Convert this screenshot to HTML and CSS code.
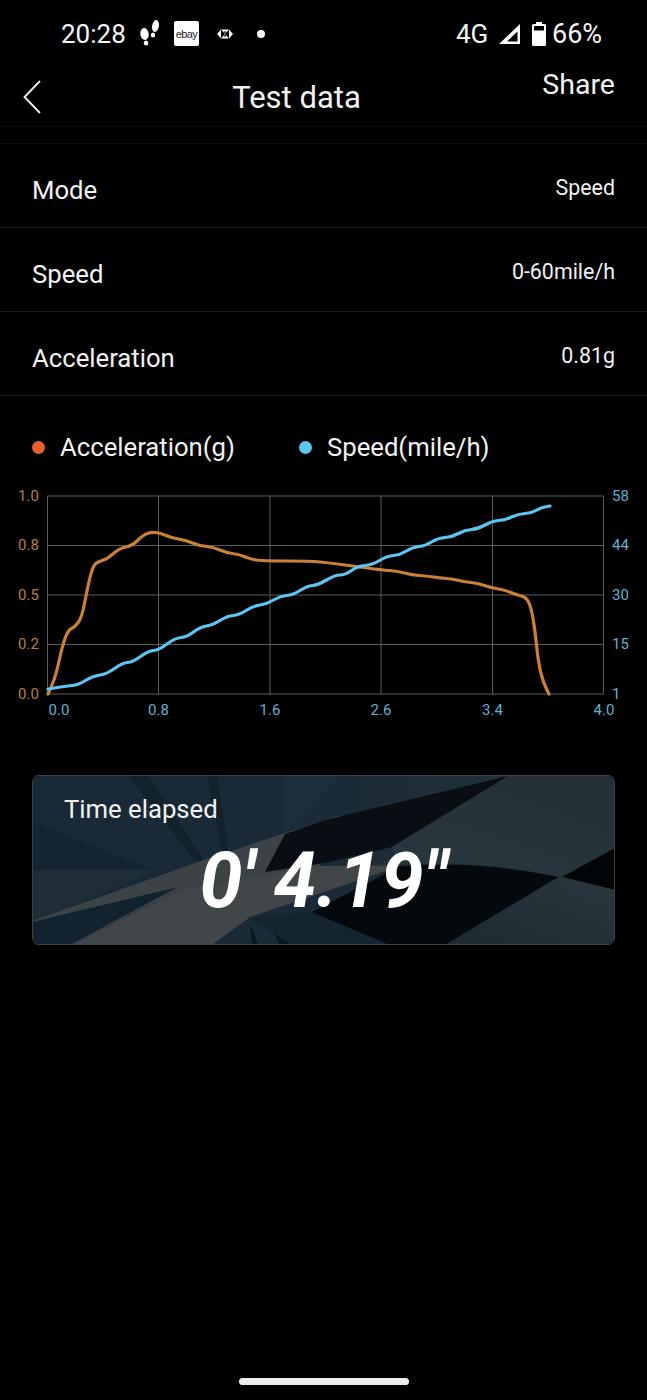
FILE: index.html
```html
<!DOCTYPE html>
<html lang="en">
<head>
<meta charset="utf-8">
<title>Test data</title>
<link rel="stylesheet" href="styles.css">
</head>
<body>
<div class="phone">
  <div class="status">
    <div class="status-left">
      <span class="clock">20:28</span>
      <svg class="ic-steps" viewBox="0 0 24 27" width="24" height="27">
        <ellipse cx="7.500" cy="14" rx="4.200" ry="6" transform="rotate(-8 7.500 14)" fill="#fff"/>
        <ellipse cx="9" cy="23" rx="2.300" ry="2.500" fill="#fff"/>
        <ellipse cx="18.500" cy="6" rx="3.400" ry="6" transform="rotate(10 18.500 6)" fill="#fff"/>
        <ellipse cx="16" cy="15" rx="2.200" ry="2.500" fill="#fff"/>
      </svg>
      <span class="ebay">ebay</span>
      <svg class="ic-hsbc" viewBox="0 0 16 10" width="16" height="10">
        <path d="M0 5 4 .5V9.500ZM16 5 12 .5V9.500ZM4 .5H12L8 5ZM4 9.500H12L8 5Z" fill="#fff"/>
        <path d="M6.500 2.500H9.500L8 4.500ZM6.500 7.500H9.500L8 5.500Z" fill="#000"/>
      </svg>
      <span class="dot"></span>
    </div>
    <div class="status-right">
      <span class="net">4G</span>
      <svg class="ic-signal" viewBox="0 0 23 22" width="23" height="22">
        <path d="M1 21 22 1V21ZM9 18.500H19.500V8.500Z" fill="#fff" fill-rule="evenodd"/>
      </svg>
      <svg class="ic-batt" viewBox="0 0 14 24" width="14" height="24">
        <path d="M4 0H10V2H12.500Q14 2 14 3.500V22.500Q14 24 12.500 24H1.500Q0 24 0 22.500V3.500Q0 2 1.500 2H4Z" fill="#fff"/>
        <rect x="2" y="4" width="10" height="4.500" fill="#000"/>
      </svg>
      <span class="pct">66%</span>
    </div>
  </div>

  <header class="nav">
    <svg class="back" viewBox="0 0 18 34" width="18" height="34">
      <path d="M17 1 1.500 17 17 33" fill="none" stroke="#f2f2f2" stroke-width="1.800"/>
    </svg>
    <h1 class="title">Test data</h1>
    <span class="share">Share</span>
  </header>
  <div class="spacer"></div>

  <div class="row"><span class="row-label">Mode</span><span class="row-value">Speed</span></div>
  <div class="row"><span class="row-label">Speed</span><span class="row-value">0-60mile/h</span></div>
  <div class="row"><span class="row-label">Acceleration</span><span class="row-value">0.81g</span></div>

  <div class="legend">
    <span class="legend-item"><i class="swatch swatch-orange"></i>Acceleration(g)</span>
    <span class="legend-item"><i class="swatch swatch-blue"></i>Speed(mile/h)</span>
  </div>

  <svg class="chart" viewBox="0 485 647 235" width="647" height="235">
    <g class="grid">
      <path d="M47.500 496H603.500M47.500 545.500H603.500M47.500 595H603.500M47.500 644.500H603.500M47.500 694H603.500"/>
      <path d="M47.500 496V694M158.500 496V694M270 496V694M381 496V694M492.500 496V694M603.500 496V694"/>
    </g>
    <g class="lab-left">
      <text x="18" y="501">1.0</text>
      <text x="18" y="550">0.8</text>
      <text x="18" y="600">0.5</text>
      <text x="18" y="649">0.2</text>
      <text x="18" y="699">0.0</text>
    </g>
    <g class="lab-right">
      <text x="612" y="501">58</text>
      <text x="612" y="550">44</text>
      <text x="612" y="600">30</text>
      <text x="612" y="649">15</text>
      <text x="612" y="699">1</text>
    </g>
    <g class="lab-bottom">
      <text x="59" y="715">0.0</text>
      <text x="158.500" y="715">0.8</text>
      <text x="270" y="715">1.6</text>
      <text x="381" y="715">2.6</text>
      <text x="492.500" y="715">3.4</text>
      <text x="604" y="715">4.0</text>
    </g>
    <path class="line-orange" d="M48 694Q55 680 58.500 663.500Q62 647 65 638.500Q68 630 71.500 628.500Q75 627 78.500 622Q82 617 84.500 603.500Q87 590 90 577.500Q93 565 96.500 563Q100 561 103.500 560Q107 559 113.500 553.500Q120 548 126 547Q132 546 137.500 540.500Q143 535 147.500 533.500Q152 532 156 532.500Q160 533 166 535.500Q172 538 178.500 539Q185 540 192.500 543Q200 546 206.500 546.500Q213 547 220 550Q227 553 232.500 553.500Q238 554 245.500 557Q253 560 261.500 560.500Q270 561 290 561Q310 561 320 562Q330 563 341.500 564.500Q353 566 367.500 568Q382 570 389.500 570.500Q397 571 404.500 573Q412 575 419.500 575.500Q427 576 433.500 577Q440 578 446.500 578.500Q453 579 459 580.500Q465 582 471 582.500Q477 583 484.500 585.500Q492 588 498.500 589Q505 590 511 592.500Q517 595 521.500 596Q526 597 528.500 602Q531 607 533 618.500Q535 630 536.500 645Q538 660 540.500 671.500Q543 683 549 694"/>
    <path class="line-blue" d="M48 689L57.500 687.500Q67 686 72.500 685.500Q78 685 85.500 680.500Q93 676 100 675Q107 674 114.500 668.500Q122 663 127.500 662.500Q133 662 140.500 656.500Q148 651 153.500 650.500Q159 650 167 644Q175 638 181 637.500Q187 637 193.500 632Q200 627 206.500 626Q213 625 220 620.500Q227 616 233 615.500Q239 615 246 610.500Q253 606 260 605Q267 604 273.500 600Q280 596 286.500 595.500Q293 595 300 590.500Q307 586 312.500 585.500Q318 585 326.500 580Q335 575 340 575Q345 575 351.500 570.500Q358 566 365 565.500Q372 565 379.500 560.500Q387 556 393.500 555.500Q400 555 406.500 551Q413 547 419 546.500Q425 546 431.500 542Q438 538 445 537.500Q452 537 458.500 533.500Q465 530 471.500 529.500Q478 529 485 525Q492 521 498.500 520.500Q505 520 511.500 517Q518 514 525 513.500Q532 513 537 510Q542 507 550 506"/>
  </svg>

  <section class="card">
    <svg class="card-art" viewBox="32 775 583 170" preserveAspectRatio="none">
      <defs>
        <linearGradient id="base" x1="0" x2="1" y1="0" y2="0">
          <stop offset="0" stop-color="#182834"/>
          <stop offset=".5" stop-color="#1a2a36"/>
          <stop offset="1" stop-color="#27333a"/>
        </linearGradient>
        <linearGradient id="lower" x1="0" x2="1" y1="1" y2="0">
          <stop offset="0" stop-color="#1d2a32"/>
          <stop offset="1" stop-color="#2b363d"/>
        </linearGradient>
        <linearGradient id="upper" x1="0" x2="1" y1="1" y2="0">
          <stop offset="0" stop-color="#2a3840"/>
          <stop offset="1" stop-color="#232f37"/>
        </linearGradient>
      </defs>
      <rect x="32" y="775" width="583" height="170" fill="url(#base)"/>
      <path d="M32 870H155L32 925Z" fill="#1f2d37"/>
      <path d="M32 822 155 870H32Z" fill="#142531"/>
      <path d="M128 775H148L205 862 196 862ZM207 775H217L228 850 222 852Z" fill="#12222d"/>
      <path d="M285 775H340L285 833Z" fill="#1d2f3c"/>
      <path d="M32 921 198 862 285 833 340 815 320 866 185 888 72 945H32Z" fill="#3c4346"/>
      <path d="M32 922 178 887 70 945H32Z" fill="#122330"/>
      <path d="M185 888 320 866 400 866 250 917 212 945H72Z" fill="#414649"/>
      <path d="M250 923 258 945H252ZM265 915 293 945H280Z" fill="#0c1820"/>
      <path d="M508 776 325 820 285 834 265 872 325 863 392 847Z" fill="#080e13"/>
      <path d="M392 847 508 776H615V848L562 877Q510 866 458 863L325 866 400 866Z" fill="url(#upper)"/>
      <path d="M400 866Q480 860 558 877L445 945H390L312 912Z" fill="#04090d"/>
      <path d="M250 918 312 912 390 945H292Z" fill="#15252f"/>
      <path d="M312 912 445 945H390Z" fill="#04090d"/>
      <path d="M615 848 562 877 615 890Z" fill="#020507"/>
      <path d="M562 877 615 890V945H445Z" fill="url(#lower)"/>
    </svg>
    <span class="card-label">Time elapsed</span>
    <span class="card-time">0' 4.19"</span>
  </section>

  <div class="home"></div>
</div>
</body>
</html>
```

FILE: styles.css
```css
* { box-sizing: border-box; }
html, body { margin: 0; padding: 0; background: #000; }
body { font-family: Roboto, "Liberation Sans", sans-serif; color: #f4f4f4; }
.phone { width: 647px; height: 1400px; display: flex; flex-direction: column; background: #000; overflow: hidden; }

.status { height: 64px; display: flex; justify-content: space-between; align-items: center; padding: 3px 46px 0 61px; font-size: 26px; color: #f6f6f6; }
.status-left, .status-right { display: flex; align-items: center; }
.clock { width: 65px; }
.ic-steps { margin-left: 11px; }
.ebay { margin-left: 13px; width: 25px; height: 25px; background: #fff; border-radius: 2px; color: #222; font-family: "Liberation Sans", sans-serif; font-size: 11px; letter-spacing: -0.6px; display: flex; align-items: center; justify-content: center; }
.ic-hsbc { margin-left: 18px; }
.dot { margin-left: 24px; width: 8px; height: 8px; border-radius: 50%; background: #fff; }
.net { width: 34px; }
.ic-signal { margin-left: 8px; }
.ic-batt { margin-left: 11px; }
.pct { margin-left: 6px; width: 49px; font-size: 27px; white-space: nowrap; }

.nav { height: 63px; position: relative; border-bottom: 1px solid #0b0b0b; display: flex; justify-content: center; padding-right: 54px; }
.title { margin: 16px 0 0; font-size: 31px; font-weight: 400; line-height: 36px; color: #f2f2f2; }
.back { position: absolute; left: 23px; top: 16px; }
.share { position: absolute; right: 32px; top: 4px; font-size: 28.500px; line-height: 34px; color: #f2f2f2; }
.spacer { height: 17px; border-bottom: 1px solid #0f0f0f; }

.row { height: 84px; display: flex; justify-content: space-between; padding: 0 32px; border-bottom: 1px solid #1a1a1a; }
.row-label { font-size: 25.700px; line-height: 30px; margin-top: 31px; color: #f2f2f2; }
.row-value { font-size: 21.400px; line-height: 24px; margin-top: 32px; color: #f2f2f2; }

.legend { height: 89px; display: flex; align-items: flex-start; padding: 36px 0 0 32px; font-size: 25.700px; line-height: 30px; color: #f2f2f2; }
.legend-item { display: flex; align-items: center; }
.legend-item + .legend-item { margin-left: 64px; }
.swatch { width: 13px; height: 13px; border-radius: 50%; margin-right: 15px; }
.swatch-orange { background: #e5622d; }
.swatch-blue { background: #5cc5f2; }

.chart { display: block; flex: none; }
.grid path { fill: none; stroke: #5c5c5c; stroke-width: 1; }
.lab-left text, .lab-right text, .lab-bottom text { font-size: 15px; }
.lab-left text { fill: #b5813f; }
.lab-right text, .lab-bottom text { fill: #5fb2d6; }
.lab-bottom text { text-anchor: middle; }
.line-orange, .line-blue { fill: none; stroke-width: 3.200; stroke-linecap: round; }
.line-orange { stroke: #c9813a; }
.line-blue { stroke: #5cc6f0; }

.card { position: relative; margin: 55px 32px 0; height: 170px; border-radius: 7px; border: 1px solid #3c4246; overflow: hidden; display: flex; flex-direction: column; }
.card-art { position: absolute; inset: -1px; width: 583px; height: 170px; filter: blur(0.7px); }
.card-label { position: relative; margin: 18px 0 0 31px; font-size: 25.700px; line-height: 30px; color: #f2f2f2; }
.card-time { position: relative; margin-top: 12px; align-self: center; font-size: 77px; line-height: 90px; font-weight: 700; font-style: italic; color: #fff; white-space: nowrap; }

.home { margin: auto auto 0; width: 170px; height: 7px; border-radius: 4px; background: #ececec; transform: translateY(-15px); }
```
